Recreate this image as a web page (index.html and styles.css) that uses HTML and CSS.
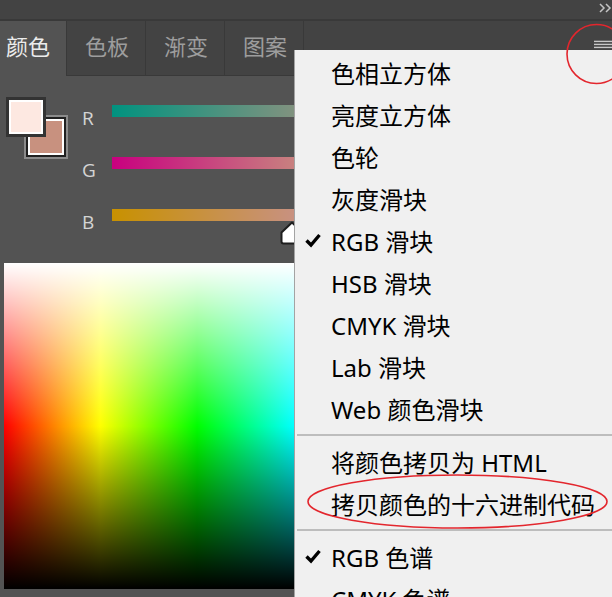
FILE: index.html
```html
<!DOCTYPE html>
<html lang="zh-CN">
<head>
<meta charset="utf-8">
<title>颜色面板</title>
<link rel="stylesheet" href="styles.css">
</head>
<body>
<div class="app">
  <div class="topbar">
    <svg class="collapse" width="13" height="10" viewBox="0 0 13 10"><path d="M1 1 L5 5 L1 9 M7 1 L11 5 L7 9" fill="none" stroke="#c4c4c4" stroke-width="1.5"/></svg>
  </div>
  <div class="tabs">
    <div class="tab active">颜色</div>
    <div class="tab">色板</div>
    <div class="tab">渐变</div>
    <div class="tab">图案</div>
    <div class="tab-fill">
      <svg class="panel-menu" width="18" height="9" viewBox="0 0 18 9"><rect x="0" y="0.7" width="18" height="1.4" fill="#c8c8c8"/><rect x="0" y="3.7" width="18" height="1.4" fill="#c8c8c8"/><rect x="0" y="6.7" width="18" height="1.4" fill="#c8c8c8"/></svg>
    </div>
  </div>
  <div class="panel">
    <div class="controls">
      <div class="swatches">
        <div class="swatch swatch-bg"></div>
        <div class="swatch swatch-fg"></div>
      </div>
      <div class="sliders">
        <div class="slider-row"><span class="lbl">R</span><div class="bar bar-r"></div></div>
        <div class="slider-row"><span class="lbl">G</span><div class="bar bar-g"></div></div>
        <div class="slider-row"><span class="lbl">B</span><div class="bar bar-b">
          <svg class="thumb" style="left:49.8%" width="24" height="24" viewBox="0 0 24 24"><path d="M12 1.5 L22.5 11.5 V20.5 Q22.5 22.5 20.5 22.5 H3.5 Q1.5 22.5 1.5 20.5 V11.5 Z" fill="#fff" stroke="#1e1e1e" stroke-width="2" stroke-linejoin="round"/></svg>
        </div></div>
      </div>
    </div>
    <div class="spectrum"></div>
  </div>

  <div class="menu">
    <div class="mi"><span class="gutter"></span>色相立方体</div>
    <div class="mi"><span class="gutter"></span>亮度立方体</div>
    <div class="mi"><span class="gutter"></span>色轮</div>
    <div class="mi"><span class="gutter"></span>灰度滑块</div>
    <div class="mi"><span class="gutter"><svg class="chk" width="16" height="16" viewBox="0 0 16 16"><path d="M1.5 8.5 L6 13 L14.5 3" fill="none" stroke="#000" stroke-width="3.4"/></svg></span>RGB 滑块</div>
    <div class="mi"><span class="gutter"></span>HSB 滑块</div>
    <div class="mi"><span class="gutter"></span>CMYK 滑块</div>
    <div class="mi"><span class="gutter"></span>Lab 滑块</div>
    <div class="mi"><span class="gutter"></span>Web 颜色滑块</div>
    <div class="sep"></div>
    <div class="mi"><span class="gutter"></span>将颜色拷贝为 HTML</div>
    <div class="mi"><span class="gutter"></span>拷贝颜色的十六进制代码</div>
    <div class="sep"></div>
    <div class="mi"><span class="gutter"><svg class="chk" width="16" height="16" viewBox="0 0 16 16"><path d="M1.5 8.5 L6 13 L14.5 3" fill="none" stroke="#000" stroke-width="3.4"/></svg></span>RGB 色谱</div>
    <div class="mi"><span class="gutter"></span>CMYK 色谱</div>
  </div>

  <svg class="annot" width="612" height="597" viewBox="0 0 612 597">
    <circle cx="596.5" cy="54" r="29.5" fill="none" stroke="#e3262d" stroke-width="1.6"/>
    <ellipse cx="457.5" cy="501.5" rx="149.5" ry="26.5" fill="none" stroke="#e3262d" stroke-width="1.6"/>
  </svg>
</div>
</body>
</html>
```

FILE: styles.css
```css
html, body {
  margin: 0;
  padding: 0;
}

body {
  background: #535353;
  overflow: hidden;
}

.app {
  position: relative;
  width: 612px;
  height: 597px;
  overflow: hidden;
  background: #535353;
  font-family: "Noto Sans CJK SC", sans-serif;
}

.topbar {
  height: 19px;
  background: #434343;
  border-bottom: 2px solid #393939;
  display: flex;
  justify-content: flex-end;
  align-items: flex-start;
}

.collapse {
  margin-top: 3px;
  margin-right: 0;
}

.tabs {
  display: flex;
  height: 55px;
  background: #434343;
}

.tab {
  box-sizing: border-box;
  height: 55px;
  padding: 13px 16px 0 18px;
  font-size: 22px;
  line-height: 22px;
  color: #9d9d9d;
  border-right: 1px solid #393939;
  border-bottom: 1px solid #393939;
  white-space: nowrap;
}

.tab.active {
  padding-left: 6px;
  color: #ececec;
  background: #535353;
  border-bottom: none;
}

.tab-fill {
  flex: 1;
  box-sizing: border-box;
  height: 55px;
  border-bottom: 1px solid #393939;
  display: flex;
  justify-content: flex-end;
  align-items: flex-start;
}

.panel-menu {
  margin-top: 19px;
}

.panel {
  padding-top: 21px;
}

.controls {
  display: flex;
  align-items: flex-start;
}

.swatches {
  position: relative;
  width: 62px;
  height: 62px;
  margin-left: 6px;
  flex: none;
}

.swatch {
  position: absolute;
  box-sizing: border-box;
}

.swatch-fg {
  left: 0;
  top: 0;
  width: 40px;
  height: 40px;
  border: 3px solid #333333;
  box-shadow: inset 0 0 0 2px #ffffff;
  background: #fde8e1;
}

.swatch-bg {
  left: 18px;
  top: 18px;
  width: 44px;
  height: 44px;
  border: 2px solid #8b8b8b;
  box-shadow: inset 0 0 0 2px #202020, inset 0 0 0 4px #ffffff;
  background: #c8917f;
}

.sliders {
  margin-left: 14px;
  margin-top: 8px;
}

.slider-row {
  display: flex;
  align-items: flex-start;
  height: 52px;
}

.lbl {
  width: 30px;
  flex: none;
  font-family: "Open Sans", "Noto Sans", sans-serif;
  font-size: 19px;
  line-height: 26px;
  color: #d4d4d4;
}

.bar {
  position: relative;
  width: 362px;
  height: 12px;
  flex: none;
}

.bar-r {
  background: linear-gradient(to right, rgb(0, 146, 127), rgb(255, 146, 127));
}

.bar-g {
  background: linear-gradient(to right, rgb(200, 0, 127), rgb(200, 255, 127));
}

.bar-b {
  background: linear-gradient(to right, rgb(200, 145, 0), rgb(200, 145, 255));
}

.thumb {
  position: absolute;
  top: 12px;
  transform: translateX(-50%);
}

.spectrum {
  margin: 2px 0 0 4px;
  width: 290px;
  height: 326px;
  background:
    linear-gradient(to bottom, #ffffff 0%, rgba(255, 255, 255, 0) 50%, rgba(0, 0, 0, 0) 50%, #000000 100%),
    linear-gradient(to right, #ff0000 0%, #ffff00 33.3%, #00ff00 66.6%, #00ffff 100%);
}

.menu {
  position: absolute;
  left: 294px;
  top: 50px;
  width: 340px;
  bottom: 0;
  box-sizing: border-box;
  padding-top: 3px;
  background: #f0f0f0;
  border-left: 1px solid #a3a3a3;
  font-family: "Noto Sans", "Noto Sans CJK SC", sans-serif;
  font-size: 24px;
  color: #000000;
}

.mi {
  display: flex;
  align-items: center;
  height: 42px;
  line-height: 42px;
  white-space: nowrap;
}

.gutter {
  width: 36px;
  height: 42px;
  flex: none;
  display: flex;
  align-items: center;
}

.chk {
  margin-left: 10px;
  margin-top: -4px;
}

.sep {
  height: 2px;
  background: #bdbdbd;
  margin: 3px 0 6px 2px;
}

.annot {
  position: absolute;
  left: 0;
  top: 0;
  pointer-events: none;
}
```
